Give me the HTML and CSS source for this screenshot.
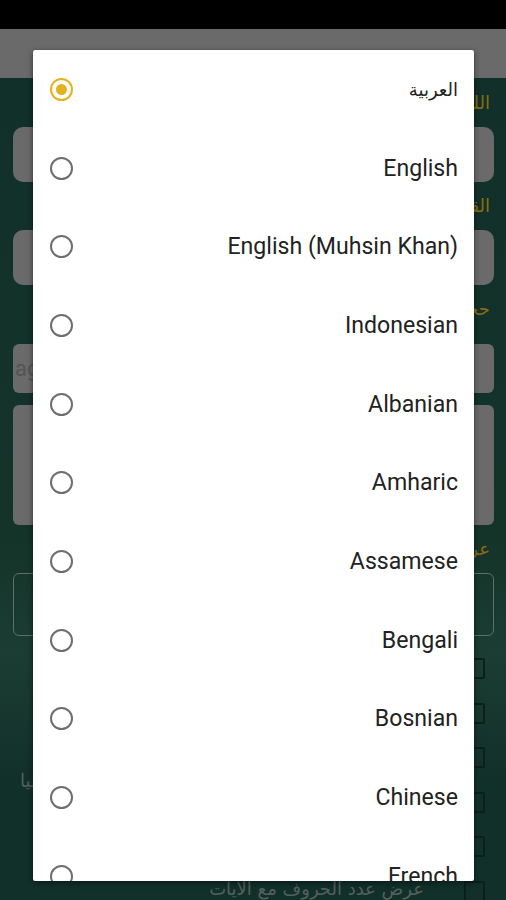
FILE: index.html
```html
<!DOCTYPE html>
<html lang="en">
<head>
<meta charset="utf-8">
<title>Language</title>
<link rel="stylesheet" href="styles.css">
</head>
<body>
<div class="screen">
  <div class="status-bar"></div>
  <div class="app-bar"></div>
  <div class="content">
    <div class="label">اللغة</div>
    <div class="field field-tall"></div>
    <div class="label">القارئ</div>
    <div class="field field-tall"></div>
    <div class="label">حجم</div>
    <div class="field field-text">ag</div>
    <div class="field field-big"></div>
    <div class="label">عرض</div>
    <div class="field-outline"></div>
    <div class="checks">
      <div class="check-row"><span class="check"></span></div>
      <div class="check-row"><span class="check"></span></div>
      <div class="check-row"><span class="check"></span></div>
      <div class="check-row"><span class="left-text">ليا</span><span class="check"></span></div>
      <div class="check-row"><span class="check"></span></div>
      <div class="check-row"><span class="row-text">عرض عدد الحروف مع الايات</span><span class="check"></span></div>
    </div>
  </div>

  <div class="dialog">
    <div class="option selected"><span class="radio"></span><span class="opt-label arabic">العربية</span></div>
    <div class="option"><span class="radio"></span><span class="opt-label">English</span></div>
    <div class="option"><span class="radio"></span><span class="opt-label">English (Muhsin Khan)</span></div>
    <div class="option"><span class="radio"></span><span class="opt-label">Indonesian</span></div>
    <div class="option"><span class="radio"></span><span class="opt-label">Albanian</span></div>
    <div class="option"><span class="radio"></span><span class="opt-label">Amharic</span></div>
    <div class="option"><span class="radio"></span><span class="opt-label">Assamese</span></div>
    <div class="option"><span class="radio"></span><span class="opt-label">Bengali</span></div>
    <div class="option"><span class="radio"></span><span class="opt-label">Bosnian</span></div>
    <div class="option"><span class="radio"></span><span class="opt-label">Chinese</span></div>
    <div class="option"><span class="radio"></span><span class="opt-label">French</span></div>
  </div>
</div>
</body>
</html>
```

FILE: styles.css
```css
* { box-sizing: border-box; }
html, body { margin: 0; padding: 0; }
body {
  width: 506px;
  height: 900px;
  overflow: hidden;
  font-family: Roboto, "Noto Sans", sans-serif;
  background: #000;
}
.screen {
  position: relative;
  width: 506px;
  height: 900px;
  display: flex;
  flex-direction: column;
  overflow: hidden;
}
.status-bar { height: 29px; background: #000; flex: none; }
.app-bar { height: 49px; background: #6a6a6a; flex: none; }
.content {
  flex: 1;
  background: linear-gradient(180deg, #11302a 0%, #143329 55%, #1b3d33 70%, #12302a 85%, #11302a 100%);
  padding: 13px 12px 0 13px;
  display: flex;
  flex-direction: column;
  direction: rtl;
  overflow: hidden;
}
.label {
  color: #8a6d12;
  font-family: "DejaVu Sans", sans-serif;
  font-size: 18px;
  height: 36px;
  line-height: 24px;
  padding-right: 4px;
  flex: none;
}
.field {
  background: #6a6a6a;
  border-radius: 10px;
  flex: none;
}
.field-tall { height: 55px; margin-bottom: 12px; }
.field-text {
  height: 49px;
  border-radius: 6px;
  margin-top: 11px;
  margin-bottom: 12px;
  direction: ltr;
  color: #545454;
  font-size: 22px;
  line-height: 49px;
  padding-left: 2px;
}
.field-big { height: 120px; border-radius: 6px; margin-bottom: 12px; }
.field-outline {
  height: 63px;
  border: 1px solid #5f6f69;
  border-radius: 6px;
  flex: none;
}
.checks {
  display: flex;
  flex-direction: column;
  margin-top: 22px;
}
.check-row {
  height: 44.5px;
  flex: none;
  display: flex;
  align-items: flex-start;
  position: relative;
}
.check {
  width: 21px;
  height: 21px;
  border: 2px solid #0c1f1a;
  border-radius: 2px;
  margin-right: 9px;
  flex: none;
  order: 1;
}
.left-text {
  position: absolute;
  left: 7px;
  top: -22px;
  color: #55605b;
  font-family: "DejaVu Sans", sans-serif;
  font-size: 18px;
}
.row-text {
  color: #55605b;
  font-family: "DejaVu Sans", sans-serif;
  font-size: 18px;
  margin-right: 40px;
  line-height: 20px;
  margin-top: -2px;
  order: 2;
}

.dialog {
  position: absolute;
  left: 33px;
  top: 50px;
  width: 441px;
  height: 831px;
  background: #fff;
  border-radius: 2px;
  box-shadow: 0 2px 6px rgba(0,0,0,0.45), 0 0 1px rgba(0,0,0,0.5);
  overflow: hidden;
  display: flex;
  flex-direction: column;
}
.option {
  height: 78.7px;
  flex: none;
  display: flex;
  align-items: center;
  padding: 0 16px 0 17px;
}
.radio {
  width: 23px;
  height: 23px;
  border: 2px solid #6e6e6e;
  border-radius: 50%;
  flex: none;
  display: flex;
  align-items: center;
  justify-content: center;
}
.selected .radio { border-color: #e3b21f; }
.selected .radio::after {
  content: "";
  width: 11px;
  height: 11px;
  border-radius: 50%;
  background: #e3b21f;
}
.opt-label {
  flex: 1;
  text-align: right;
  font-size: 23.1px;
  color: #222;
}
.opt-label.arabic {
  font-family: "DejaVu Serif", "DejaVu Sans", serif;
  font-size: 18px;
}
```
